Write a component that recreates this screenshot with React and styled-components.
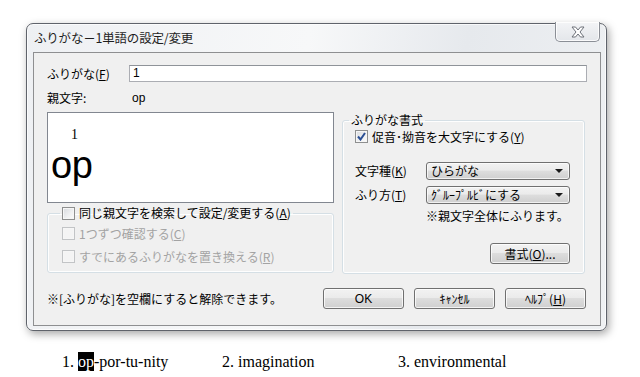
import React from "react";
import styled, { createGlobalStyle } from "styled-components";

const GlobalStyle = createGlobalStyle`
  html, body {
    margin: 0;
    padding: 0;
    background: #ffffff;
  }
  body {
    font-family: "Noto Sans CJK JP", "Noto Sans", sans-serif;
    font-size: 12px;
    color: #000;
  }
`;

const Page = styled.div`
  width: 640px;
  height: 377px;
  padding: 23px 0 0 26px;
  box-sizing: border-box;
  overflow: hidden;
`;

const Window = styled.div`
  width: 581px;
  height: 308px;
  box-sizing: border-box;
  border: 1px solid #5f636b;
  border-radius: 7px;
  background: linear-gradient(100deg, #eef0f3 0%, #f7f8f9 45%, #e6e9ed 70%, #eff1f3 100%);
  box-shadow: 0 0 0 1px rgba(255, 255, 255, 0.7) inset, 2px 3px 9px rgba(0, 0, 0, 0.35);
  display: flex;
  flex-direction: column;
`;

const TitleBar = styled.div`
  height: 28px;
  display: flex;
  justify-content: space-between;
  align-items: flex-start;
  padding: 0 6px 0 7px;
`;

const Title = styled.div`
  font-size: 12.5px;
  line-height: 28px;
  color: #1e1e1e;
  letter-spacing: -0.2px;
`;

const CloseButton = styled.div`
  width: 45px;
  height: 20px;
  margin-top: -2px;
  box-sizing: border-box;
  border: 1px solid #8b8f96;
  border-top: none;
  border-radius: 0 0 5px 5px;
  background: linear-gradient(#f3f4f6, #e3e6ea);
  box-shadow: 0 0 0 1px rgba(255, 255, 255, 0.8) inset;
  display: flex;
  align-items: center;
  justify-content: center;
`;

const Client = styled.div`
  flex: 1;
  margin: 0 5px 4px 6px;
  border: 1px solid #8e8f91;
  background: #f0f0f0;
  padding: 12px 13px 16px 13px;
  display: flex;
  flex-direction: column;
`;

const FieldRow = styled.div`
  display: flex;
  align-items: center;
  height: ${(p) => p.$h || 16}px;
  margin-top: ${(p) => p.$mt || 0}px;
`;

const Label = styled.div`
  width: ${(p) => p.$w}px;
  flex: none;
  line-height: 16px;
  white-space: nowrap;
  color: #000;
`;

const TextInput = styled.div`
  flex: 1;
  height: 17px;
  box-sizing: border-box;
  border: 1px solid #abadb3;
  border-top-color: #8f9399;
  background: #fff;
  font-family: "Liberation Sans", Arial, sans-serif;
  font-size: 12px;
  line-height: 15px;
  padding-left: 3px;
`;

const Value = styled.div`
  font-family: "Liberation Sans", Arial, sans-serif;
  font-size: 12px;
  line-height: 16px;
`;

const Columns = styled.div`
  display: grid;
  grid-template-columns: 287px 243px;
  column-gap: 8px;
  margin-top: 6px;
  height: 161px;
`;

const LeftColumn = styled.div`
  display: flex;
  flex-direction: column;
`;

const Preview = styled.div`
  height: 91px;
  box-sizing: border-box;
  border: 1px solid #828790;
  background: #fff;
  padding-top: 14px;
`;

const RubyText = styled.div`
  font-family: "Liberation Serif", "Times New Roman", serif;
  font-size: 14px;
  line-height: 16px;
  padding-left: 23px;
`;

const BaseText = styled.div`
  font-family: "Liberation Sans", Arial, sans-serif;
  font-size: 38px;
  line-height: 38px;
  margin-top: 3px;
  padding-left: 3px;
  letter-spacing: -0.5px;
`;

const Group = styled.fieldset`
  margin: ${(p) => p.$mt || 0}px 0 0 0;
  padding: ${(p) => p.$pad};
  border: 1px solid #d5dfe5;
  border-radius: 3px;
  min-width: 0;
  display: flex;
  flex-direction: column;
  box-shadow: 0 0 0 1px rgba(255, 255, 255, 0.9) inset;
`;

const Legend = styled.legend`
  padding: 0 2px;
  margin-left: ${(p) => p.$ml || 0}px;
  line-height: 16px;
`;

const CheckRow = styled.div`
  display: flex;
  align-items: center;
  height: 16px;
  margin-top: ${(p) => p.$mt || 0}px;
  color: ${(p) => (p.$disabled ? "#a3a3a3" : "#000")};
  white-space: nowrap;
`;

const Box = styled.span`
  width: 13px;
  height: 13px;
  box-sizing: border-box;
  flex: none;
  margin-right: 4px;
  border: 1px solid ${(p) => (p.$disabled ? "#c2c4c6" : "#8e8f8f")};
  background: ${(p) =>
    p.$disabled
      ? "#f4f4f4"
      : "linear-gradient(135deg, #d8dade 0%, #f0f1f2 60%, #fbfbfb 100%)"};
  box-shadow: inset 0 0 0 1px #f6f6f6;
  display: flex;
  align-items: center;
  justify-content: center;
`;

const Mn = styled.u`
  text-underline-offset: 1px;
`;

const Select = styled.div`
  width: 146px;
  height: 18px;
  box-sizing: border-box;
  border: 1px solid #707070;
  border-radius: 3px;
  background: linear-gradient(#f2f2f2 0%, #ebebeb 45%, #dddddd 50%, #cfcfcf 100%);
  box-shadow: inset 0 0 0 1px rgba(255, 255, 255, 0.7);
  display: flex;
  align-items: center;
  justify-content: space-between;
  padding: 0 6px 0 4px;
  line-height: 16px;
  white-space: nowrap;
`;

const Arrow = styled.span`
  width: 0;
  height: 0;
  border-left: 4px solid transparent;
  border-right: 4px solid transparent;
  border-top: 4px solid #1a1a1a;
`;

const Note = styled.div`
  line-height: 16px;
  margin-top: ${(p) => p.$mt || 0}px;
  margin-left: ${(p) => p.$ml || 0}px;
  white-space: nowrap;
`;

const Button = styled.div`
  width: ${(p) => p.$w || 81}px;
  height: 21px;
  box-sizing: border-box;
  border: 1px solid #707070;
  border-radius: 3px;
  background: linear-gradient(#f2f2f2 0%, #ebebeb 45%, #dddddd 50%, #cfcfcf 100%);
  box-shadow: inset 0 0 0 1px rgba(255, 255, 255, 0.75);
  display: flex;
  align-items: center;
  justify-content: center;
  line-height: 16px;
  white-space: nowrap;
  margin-top: ${(p) => p.$mt || 0}px;
  align-self: ${(p) => p.$self || "auto"};
`;

const Latin = styled.span`
  font-family: "Liberation Sans", Arial, sans-serif;
`;

const BottomRow = styled.div`
  display: flex;
  align-items: center;
  margin-top: 15px;
  height: 21px;
`;

const ButtonGroup = styled.div`
  display: flex;
  gap: 10px;
  margin-left: auto;
  margin-right: 1px;
`;

const Words = styled.div`
  display: flex;
  margin-top: 22px;
  padding-left: 36px;
  font-family: "Liberation Serif", "Times New Roman", serif;
  font-size: 16px;
  line-height: 18px;
`;

const Word = styled.div`
  width: ${(p) => p.$w}px;
  flex: none;
  white-space: nowrap;
`;

const Mark = styled.span`
  background: #000;
  color: #fff;
  padding: 1px 0;
`;

function CloseGlyph() {
  return (
    <svg width="14" height="12" viewBox="0 0 14 12">
      <path
        d="M1 1 H4.5 L7 4 L9.5 1 H13 L9 6 L13 11 H9.5 L7 8 L4.5 11 H1 L5 6 Z"
        fill="#ffffff"
        stroke="#6d7179"
        strokeWidth="1"
        strokeLinejoin="round"
      />
    </svg>
  );
}

function Check({ checked, disabled, children, mt }) {
  return (
    <CheckRow $disabled={disabled} $mt={mt}>
      <Box $disabled={disabled}>
        {checked && (
          <svg width="9" height="9" viewBox="0 0 9 9">
            <path d="M1 4.5 L3.5 7.5 L8 1" fill="none" stroke="#2b4f94" strokeWidth="2" />
          </svg>
        )}
      </Box>
      {children}
    </CheckRow>
  );
}

export default function App() {
  return (
    <Page>
      <GlobalStyle />
      <Window>
        <TitleBar>
          <Title>ふりがな－1単語の設定/変更</Title>
          <CloseButton>
            <CloseGlyph />
          </CloseButton>
        </TitleBar>
        <Client>
          <FieldRow $h={17}>
            <Label $w={82}>
              ふりがな(<Mn>F</Mn>)
            </Label>
            <TextInput>1</TextInput>
          </FieldRow>
          <FieldRow $mt={8}>
            <Label $w={85}>親文字:</Label>
            <Value>op</Value>
          </FieldRow>
          <Columns>
            <LeftColumn>
              <Preview>
                <RubyText>1</RubyText>
                <BaseText>op</BaseText>
              </Preview>
              <Group $mt={2} $pad="0 14px 8px 14px">
                <Legend $ml={-2}>
                  <Check>
                    同じ親文字を検索して設定/変更する(<Mn>A</Mn>)
                  </Check>
                </Legend>
                <Check disabled mt={4}>
                  1つずつ確認する(<Mn>C</Mn>)
                </Check>
                <Check disabled mt={7}>
                  すでにあるふりがなを置き換える(<Mn>R</Mn>)
                </Check>
              </Group>
            </LeftColumn>
            <Group $pad="0 14px 9px 12px">
              <Legend $ml={-6}>ふりがな書式</Legend>
              <Check checked>
                促音･拗音を大文字にする(<Mn>Y</Mn>)
              </Check>
              <FieldRow $h={18} $mt={18}>
                <Label $w={71}>
                  文字種(<Mn>K</Mn>)
                </Label>
                <Select>
                  ひらがな
                  <Arrow />
                </Select>
              </FieldRow>
              <FieldRow $h={18} $mt={6}>
                <Label $w={71}>
                  ふり方(<Mn>T</Mn>)
                </Label>
                <Select>
                  ｸﾞﾙｰﾌﾟﾙﾋﾞにする
                  <Arrow />
                </Select>
              </FieldRow>
              <Note $mt={4} $ml={71}>
                ※親文字全体にふります。
              </Note>
              <Button $w={80} $mt={19} $self="flex-end">
                書式(<Mn>O</Mn>)...
              </Button>
            </Group>
          </Columns>
          <BottomRow>
            <Note>※[ふりがな]を空欄にすると解除できます。</Note>
            <ButtonGroup>
              <Button>
                <Latin>OK</Latin>
              </Button>
              <Button>ｷｬﾝｾﾙ</Button>
              <Button>
                ﾍﾙﾌﾟ(<Mn>H</Mn>)
              </Button>
            </ButtonGroup>
          </BottomRow>
        </Client>
      </Window>
      <Words>
        <Word $w={160}>
          1. <Mark>op</Mark>-por-tu-nity
        </Word>
        <Word $w={176}>2. imagination</Word>
        <Word $w={160}>3. environmental</Word>
      </Words>
    </Page>
  );
}
